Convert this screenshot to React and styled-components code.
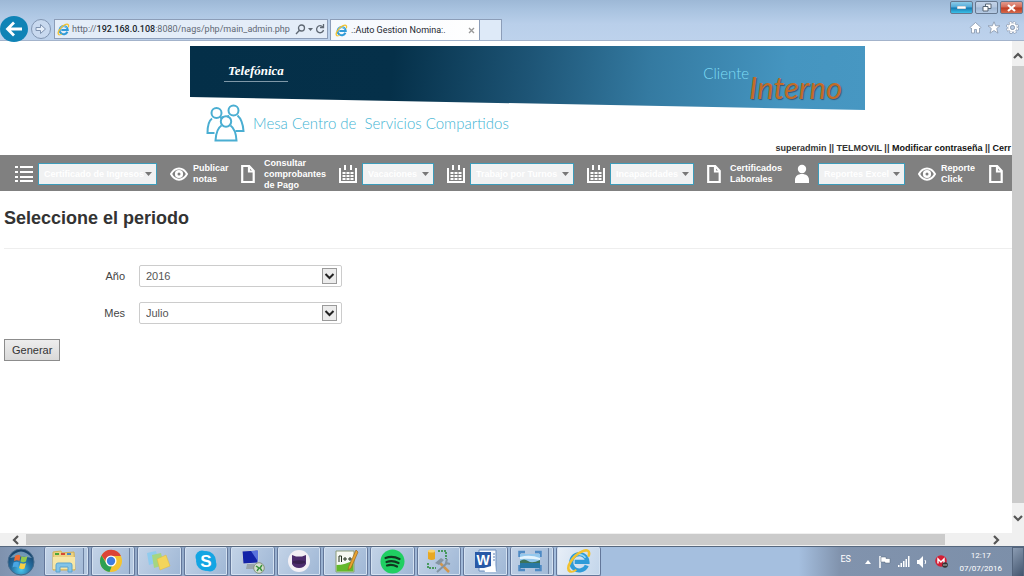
import React from "react";
import styled, { createGlobalStyle } from "styled-components";

const Global = createGlobalStyle`
  * { box-sizing: border-box; }
  body { margin: 0; background: #fff; font-family: "Liberation Sans", Arial, sans-serif; }
  button, select, input { font-family: inherit; margin: 0; }
  svg { display: block; flex: none; }
`;

const ui = `Roboto, "Noto Sans", sans-serif`;

const Screen = styled.div`
  display: flex;
  flex-direction: column;
  height: 100vh;
  overflow: hidden;
`;

/* ---------- browser frame ---------- */
const Frame = styled.header`
  flex: none;
  background: linear-gradient(#9db8d6 0, #a9c3e0 10px, #b9cfea 24px, #bdd2ec 100%);
  border-bottom: 1px solid #a3b3cb;
  font-family: ${ui};
`;
const TitleRow = styled.div`
  display: flex;
  justify-content: flex-end;
  gap: 2px;
  height: 18px;
  padding: 1px 1px 4px 0;
`;
const winTones = {
  min: "linear-gradient(#8ccbe8, #4fa9d8 48%, #1576ae 52%, #3ac0e8)",
  max: "linear-gradient(#c3d3e8, #b3c6df 48%, #9db5d3 52%, #b6cbe4)",
  close: "linear-gradient(#e39a8c, #d26a56 48%, #bd3a20 52%, #d5694c)",
};
const WinButton = styled.button`
  display: flex;
  align-items: center;
  justify-content: center;
  width: 23px;
  padding: 0;
  border: 1px solid #66788f;
  border-radius: 2px;
  background: ${(p) => winTones[p.$tone]};
`;
const BarRow = styled.div`
  display: flex;
  align-items: flex-end;
  height: 22px;
`;
const NavCircles = styled.div`
  display: flex;
  align-items: center;
  align-self: flex-start;
  width: 54px;
  height: 22px;
  gap: 3px;
`;
const BackButton = styled.button`
  display: flex;
  align-items: center;
  justify-content: center;
  flex: none;
  width: 28px;
  height: 26px;
  padding: 0;
  border: 0;
  border-radius: 50%;
  background: #0f83b6;
`;
const ForwardButton = styled.button`
  display: flex;
  align-items: center;
  justify-content: center;
  flex: none;
  width: 20px;
  height: 20px;
  padding: 0;
  border: 1px solid #8296b2;
  border-radius: 50%;
  background: #c8d9ef;
`;
const AddressBar = styled.div`
  display: flex;
  align-items: center;
  width: 274px;
  height: 20px;
  margin-bottom: 1px;
  padding: 0 2px;
  gap: 2px;
  border: 1px solid #8c9db8;
  background: #e4edf8;
`;
const Url = styled.span`
  flex: 1;
  color: #5f6873;
  font-size: 9px;
  line-height: 16px;
  white-space: nowrap;
  b { color: #20262d; font-weight: 500; }
`;
const BareButton = styled.button`
  display: flex;
  align-items: center;
  justify-content: center;
  padding: 0;
  border: 0;
  background: none;
`;
const Tab = styled.div`
  display: flex;
  align-items: center;
  width: 150px;
  height: 21px;
  margin-left: 2px;
  padding: 0 4px;
  gap: 3px;
  border: 1px solid #8c9db8;
  border-bottom: 0;
  background: linear-gradient(90deg, #f4f8fd, #fff);
  color: #22272e;
  font-size: 9px;
  line-height: 14px;
  span { flex: 1; white-space: nowrap; }
`;
const NewTab = styled.button`
  width: 22px;
  height: 21px;
  padding: 0;
  border: 1px solid #8c9db8;
  border-width: 1px 1px 0 0;
  background: #deeaf8;
`;
const Tools = styled.div`
  display: flex;
  gap: 5px;
  margin-left: auto;
  padding: 0 5px 6px 0;
`;

/* ---------- viewport and scroll bars ---------- */
const Viewport = styled.div`
  display: flex;
  flex: 1;
  min-height: 0;
`;
const Page = styled.main`
  flex: 1;
  min-width: 0;
  overflow: hidden;
  padding-top: 5px;
`;
const VBar = styled.div`
  display: flex;
  flex-direction: column;
  width: 12px;
  background: #f0f0f0;
  button { height: 30px; }
  i { flex: 1; margin: -5px 0 0; background: #cbcbcb; }
`;
const HBar = styled.div`
  display: flex;
  flex: none;
  height: 13px;
  padding-right: 12px;
  background: #f0f0f0;
  button { width: 32px; }
  i { flex: 1; margin: 1px 35px 1px -6px; background: #cbcbcb; }
`;

/* ---------- site header ---------- */
const Banner = styled.div`
  display: flex;
  justify-content: space-between;
  max-width: 675px;
  height: 64px;
  margin-left: 190px;
  padding: 15px 23px 0 34px;
  background: linear-gradient(95deg, #042f48 0, #053049 30%, #1d5475 50%, #347aa1 68%, #4595c0 88%, #4797c2 100%);
  clip-path: polygon(0 0, 100% 0, 100% 100%, 0 51px);
`;
const Brand = styled.div`
  align-self: flex-start;
  width: 64px;
  padding-left: 4px;
  border-bottom: 1px solid #7f98a8;
  color: #fff;
  font: italic bold 13px/20px "Liberation Serif", serif;
`;
const Slogan = styled.div`
  display: flex;
  align-items: flex-start;
  color: #7fdcf5;
  font: 300 15px/25px Lato, sans-serif;
  em {
    margin-top: 7px;
    color: #c26c27;
    font: italic 400 31px/38px Lato, sans-serif;
    text-shadow: 1px 1px 1px #35597a;
  }
`;
const Desk = styled.div`
  display: flex;
  align-items: center;
  height: 38px;
  margin: -6px 0 0 206px;
  gap: 8px;
  color: #3fb4d4;
  font: 300 15px/22px Lato, sans-serif;
  white-space: pre;
`;
const Account = styled.div`
  padding: 0 1px 1px 0;
  color: #333;
  font-size: 9px;
  font-weight: bold;
  line-height: 12px;
  text-align: right;
  white-space: nowrap;
  a { color: #111; text-decoration: none; }
`;

const Menu = styled.nav`
  display: flex;
  align-items: center;
  height: 36px;
  padding: 2px 0 0 15px;
  gap: 13px;
  background: #808080;
`;
const MenuItem = styled.div`
  display: flex;
  align-items: center;
  flex: none;
  gap: 5px;
`;
const MenuLink = styled.a`
  width: ${(p) => p.$w}px;
  color: #fff;
  font-size: 9px;
  font-weight: bold;
  line-height: 11px;
  text-decoration: none;
`;
const Pick = styled.div`
  display: grid;
  align-items: center;
  width: ${(p) => p.$w}px;
  > * { grid-area: 1 / 1; }
  > svg { justify-self: end; margin-right: 5px; pointer-events: none; }
`;
const MenuSelect = styled.select`
  width: 100%;
  height: 22px;
  padding: 0 12px 0 5px;
  appearance: none;
  border: 1px solid #3d9cba;
  border-radius: 0;
  background: #f0f1f2;
  color: #fff;
  font-size: 9px;
  font-weight: bold;
`;

/* ---------- form ---------- */
const Heading = styled.h1`
  margin: 0 0 0 4px;
  padding: 15px 0 18px;
  border-bottom: 1px solid #eee;
  color: #333;
  font-size: 18px;
  line-height: 24px;
`;
const Form = styled.form`
  display: flex;
  flex-direction: column;
  align-items: flex-start;
  gap: 15px;
  padding: 16px 4px;
  color: #444;
  font-size: 11px;
`;
const Field = styled.div`
  display: flex;
  align-items: center;
  gap: 14px;
  label { width: 121px; text-align: right; }
`;
const FormSelect = styled.select`
  width: 100%;
  height: 22px;
  padding: 0 24px 0 6px;
  appearance: none;
  border: 1px solid #ccc;
  border-radius: 2px;
  background: #fff;
  color: #555;
  font-size: 11px;
`;
const Submit = styled.button`
  height: 22px;
  padding: 0 7px;
  border: 1px solid #8c8c8c;
  border-radius: 0;
  background: linear-gradient(#ededed, #d9d9d9);
  color: #333;
  font-size: 11px;
`;

/* ---------- taskbar ---------- */
const Taskbar = styled.footer`
  display: flex;
  flex: none;
  height: 30px;
  border-top: 1px solid #56687f;
  background: linear-gradient(90deg, #7f92ae 0, #8da4c3 44px, #a5bfdf 600px, #a5bfdf 78%, #8193ad 82%, #7c8fa9 100%);
  font-family: ${ui};
`;
const Start = styled(BareButton)`
  width: 41px;
`;
const Apps = styled.div`
  display: grid;
  grid-template-columns: repeat(12, minmax(0, 1fr));
  flex: 0 1 557px;
  gap: 2px;
  margin-left: 3px;
`;
const TaskButton = styled.button`
  display: flex;
  align-items: center;
  justify-content: center;
  padding: 0 ${(p) => (p.$stack ? 4 : 0)}px 0 0;
  border: 1px solid #63779a;
  border-top: 0;
  border-radius: 2px;
  box-shadow: inset 0 0 0 1px #d3e1f1${(p) => (p.$stack ? ", inset -4px 0 0 #b4c8e0, inset -5px 0 0 #6d82a2" : "")};
  background: ${(p) => (p.$active ? "linear-gradient(110deg, #e8eff8, #c2d5ea)" : "linear-gradient(120deg, #c3d3e7, #9fb7d5)")};
`;
const Tray = styled.div`
  display: flex;
  align-items: center;
  margin-left: auto;
  gap: 7px;
  color: #fff;
  font-size: 9px;
  line-height: 13px;
`;
const Lang = styled.span`
  width: 18px;
  margin-bottom: 5px;
`;
const Clock = styled.time`
  margin: 0 3px 0 4px;
  font-size: 8px;
  text-align: center;
`;
const ShowDesktop = styled.button`
  align-self: stretch;
  width: 12px;
  padding: 0;
  border: 1px solid #53647c;
  border-bottom: 0;
  background: linear-gradient(135deg, #8b9cb3, #43556e);
`;

/* ---------- icons ---------- */
const IeIcon = ({ size }) => (
  <svg width={size} height={size} viewBox="0 0 24 24" fill="none">
    <path d="M19.2 16.2A7.5 7.5 0 1 1 19.8 12.8H8" stroke="#2f9bd8" strokeWidth="3.8" />
    <path d="M6 10A7 7 0 0 1 18 9" stroke="#8fd6f5" strokeWidth="1.4" />
    <path d="M3.5 21.5C-1 18 7 7 14 3.6c5-2.6 8.5-1.6 7 3.4" stroke="#f2c230" strokeWidth="2.4" strokeLinecap="round" />
    <path d="M3.5 21.5c1.5 1 4 0 6-1.5" stroke="#f2c230" strokeWidth="1.8" />
  </svg>
);
const Chevron = ({ d }) => (
  <svg width="12" height="12" viewBox="0 0 12 12" fill="none" stroke="#555" strokeWidth="2.2"><path d={d} /></svg>
);
const Caret = () => <svg width="7" height="4" viewBox="0 0 7 4"><path d="M0 0h7L3.5 4z" fill="#777" /></svg>;
const DropBox = () => (
  <svg width="15" height="16" viewBox="0 0 15 16">
    <rect x=".5" y=".5" width="14" height="15" fill="#ececec" stroke="#9a9a9a" />
    <path d="M3.5 6l4 4 4-4" fill="none" stroke="#222" strokeWidth="2" />
  </svg>
);
const ListIcon = () => (
  <svg width="18" height="18" viewBox="0 0 18 18" fill="#fff">
    {[1, 6, 11, 15].map((y) => <path key={y} d={`M0 ${y}h3v2H0zM5 ${y}h13v2H5z`} />)}
  </svg>
);
const EyeIcon = () => (
  <svg width="18" height="18" viewBox="0 0 18 18" fill="none" stroke="#fff">
    <path d="M1 9c4-7.5 12-7.5 16 0-4 7.5-12 7.5-16 0z" strokeWidth="2" />
    <circle cx="9" cy="9" r="2.8" strokeWidth="2.6" />
  </svg>
);
const DocIcon = () => (
  <svg width="18" height="20" viewBox="0 0 18 20" fill="none" stroke="#fff" strokeWidth="2.2">
    <path d="M1.2 2h7l4.5 5v11H1.2z" /><path d="M8 2v5.500h5" />
  </svg>
);
const CalendarIcon = () => (
  <svg width="18" height="20" viewBox="0 0 18 20" fill="#fff">
    <path d="M0 4h2v13h14V4h2v15H0zM5 1h2v5H5zM11 1h2v5h-2z" />
    {[8, 11, 14].map((y) => <path key={y} d={`M3.5 ${y}h3v2h-3zM7.5 ${y}h3v2h-3zM11.5 ${y}h3v2h-3z`} />)}
  </svg>
);
const PersonIcon = () => (
  <svg width="18" height="20" viewBox="0 0 18 20" fill="#fff">
    <circle cx="7" cy="5" r="4.2" /><path d="M0 19v-3c0-4 3-6 7-6s7 2 7 6v3z" />
  </svg>
);
const TeamIcon = () => (
  <svg width="39" height="38" viewBox="0 0 39 38" fill="none" stroke="#4aaed2" strokeWidth="2">
    <circle cx="10.5" cy="9" r="5" /><circle cx="27.5" cy="6.5" r="5" /><circle cx="20" cy="17.5" r="5.2" />
    <path d="M6 14.5C2.500 17 1.500 22 1.500 29h7M14 14l3-1M23 11.500l-2 1.500M31.500 11.500c4 3.500 5.500 8.500 6 15.500h-8" />
    <path d="M15.500 21.500C11.500 24 10 28 9.500 36.500h21C30 28 28 24 24.500 21.500" />
  </svg>
);

const appIcons = {
  Explorador: (
    <svg width="26" height="24" viewBox="0 0 26 24">
      <path d="M2 3l8-1 1 2 12-1 1 18H2z" fill="#ecd283" stroke="#d2b052" />
      <path d="M4 4h4v2H4z" fill="#4ca63c" /><path d="M10 4h4v2h-4z" fill="#d64a36" /><path d="M16 4h4v2h-4z" fill="#4789c9" />
      <path d="M2 8h22v12H2z" fill="#f7e6a6" />
      <path d="M5 23v-7q0-2 2-2h12q2 0 2 2v7h-4v-5H9v5z" fill="#83c4e8" stroke="#5aa3d0" />
    </svg>
  ),
  Chrome: (
    <svg width="24" height="24" viewBox="0 0 24 24">
      <circle cx="12" cy="12" r="11" fill="#f4c430" />
      <path d="M2.500 6.500A11 11 0 0 1 22 7H12L9 15z" fill="#dc4437" />
      <path d="M2.500 6.500L8 15.500l5 1L10.500 23A11 11 0 0 1 2.500 6.500z" fill="#2da052" />
      <circle cx="12" cy="12" r="5.5" fill="#fff" /><circle cx="12" cy="12" r="4.2" fill="#3f7de0" />
    </svg>
  ),
  Notas: (
    <svg width="26" height="22" viewBox="0 0 26 22">
      <path d="M1 3l9-2 3 11-10 3z" fill="#8fcbee" /><path d="M6 5l9-2 3 12-10 3z" fill="#a5d681" />
      <path d="M11 9l9-4 4 11-10 4z" fill="#f3d55b" stroke="#dcb93e" strokeWidth=".5" />
    </svg>
  ),
  Skype: (
    <svg width="24" height="24" viewBox="0 0 24 24">
      <circle cx="8" cy="8" r="6.5" fill="#14a5e3" /><circle cx="16" cy="16" r="6.5" fill="#14a5e3" /><circle cx="12" cy="12" r="10" fill="#14a5e3" />
      <text x="12" y="18" textAnchor="middle" fill="#fff" fontFamily="Liberation Sans" fontWeight="bold" fontSize="17">S</text>
    </svg>
  ),
  "Escritorio remoto": (
    <svg width="26" height="26" viewBox="0 0 26 26">
      <path d="M2 3l16-1v13L3 16z" fill="#1423a8" stroke="#c8d0da" /><path d="M11 3l7-.5v11z" fill="#5971dd" />
      <path d="M7 16h7l3 5H6z" fill="#9aa4ac" />
      <circle cx="19" cy="20" r="5.3" fill="#d6dfd0" stroke="#87937f" /><path d="M16 18l3 2-2 3M22 17l-2 3 2 3" stroke="#39933b" strokeWidth="1.5" fill="none" />
    </svg>
  ),
  GitHub: (
    <svg width="24" height="24" viewBox="0 0 24 24">
      <circle cx="12" cy="12" r="11" fill="#f3f0f5" />
      <path d="M5 6l4 1.500h6L19 6v9q-2 4-7 4t-7-4z" fill="#4c2c6d" /><path d="M6 12q6-1.500 12 0v2q-6 2-12 0z" fill="#38204f" />
    </svg>
  ),
  Editor: (
    <svg width="26" height="26" viewBox="0 0 26 26">
      <path d="M3 3h18v21H3z" fill="#f6f8f2" stroke="#8c9c7b" /><path d="M3.500 17q9 0 17-5v11.500h-17z" fill="#63b82a" />
      <path d="M6 14V8h2.500v6M10 11h4M12 9v4M15 11h4M17 9v4" stroke="#24321e" fill="none" />
      <path d="M23 2l2 2-7 16-3 2 1-4z" fill="#e9a331" stroke="#9a671d" strokeWidth=".7" />
    </svg>
  ),
  Spotify: (
    <svg width="25" height="25" viewBox="0 0 25 25">
      <circle cx="12.5" cy="12.5" r="12" fill="#1fcf62" />
      <path d="M5.500 9q7-2.500 14 1M6.500 13q6-2 12 1M7 16.500q5-1.500 10 1" stroke="#10361f" strokeWidth="2.2" fill="none" strokeLinecap="round" />
    </svg>
  ),
  Herramientas: (
    <svg width="26" height="26" viewBox="0 0 26 26" fill="none">
      <path d="M2 3v8q4 2 7 0V3z" fill="#e8a822" /><ellipse cx="5.5" cy="3" rx="3.5" ry="1.5" fill="#f8d36d" />
      <path d="M12 3h8v8M2 15v5h8" stroke="#268b34" strokeWidth="1.5" strokeDasharray="2 1" />
      <path d="M13 14l10 10" stroke="#d2964c" strokeWidth="2.5" /><path d="M21 15L11 24" stroke="#8495a2" strokeWidth="2" /><path d="M9 15l6-5 3 2-5 5z" fill="#8495a2" /><path d="M21 11l-1 4 4 1" stroke="#8495a2" strokeWidth="2" />
    </svg>
  ),
  Word: (
    <svg width="24" height="24" viewBox="0 0 24 24">
      <path d="M5 1h17v21H5z" fill="#f6f9fd" stroke="#6d8ebe" /><path d="M1 3h16v16H1z" fill="#2959a6" />
      <text x="9" y="16" textAnchor="middle" fill="#fff" fontFamily="Liberation Sans" fontWeight="bold" fontSize="14">W</text>
      <path d="M10 19l11-3 1 7H11z" fill="#fff" /><path d="M19 5h2M19 8h2M19 11h2" stroke="#5d7fb5" />
    </svg>
  ),
  Imagen: (
    <svg width="24" height="22" viewBox="0 0 24 22">
      <path d="M1.500 7V2H7M17 2h5.500v5M22.500 15v5H17M7 20H1.500v-5" fill="none" stroke="#4e8ac4" strokeWidth="2.5" />
      <path d="M2 4h20v14H2z" fill="#93c8ee" /><path d="M2 11q4-3 8 0t12-1v3H2z" fill="#3d7358" /><path d="M2 13h20v5H2z" fill="#2878a5" /><path d="M2 7q10-3 20 1v2Q12 8 2 9z" fill="#e3f3fd" />
    </svg>
  ),
  "Internet Explorer": <IeIcon size={26} />,
};
const stacked = ["Explorador", "Chrome", "Imagen"];

const StartOrb = () => (
  <svg width="28" height="28" viewBox="0 0 28 28">
    <defs>
      <radialGradient id="orb" cx=".5" cy=".8" r=".8"><stop offset="0" stopColor="#49c8ef" /><stop offset=".5" stopColor="#236a9c" /><stop offset="1" stopColor="#173b60" /></radialGradient>
    </defs>
    <circle cx="14" cy="14" r="13" fill="url(#orb)" stroke="#446a8b" />
    <path d="M3 10Q14-3 25 10 14 7 3 10z" fill="#a8c6dc" opacity=".6" />
    <path d="M8 8q3-2 5.500-.5L12.500 13Q10 11.500 7 13z" fill="#ec6b35" /><path d="M14.500 8q3 2 6 0L19 13.500q-3 1.500-5.500 0z" fill="#94c94b" />
    <path d="M6.500 14.500q3-1.500 5.500 0L11 20q-2.500-2-5.500-.5z" fill="#49a6e4" /><path d="M13.500 15q3 1.500 5.500 0L17.500 20.500q-3 1.500-5.500-.5z" fill="#f8cf45" />
  </svg>
);

const menu = [
  { icon: ListIcon, select: "Certificado de Ingresos", w: 119 },
  { icon: EyeIcon, link: "Publicar notas", w: 35 },
  { icon: DocIcon, link: "Consultar comprobantes de Pago", w: 62 },
  { icon: CalendarIcon, select: "Vacaciones", w: 72 },
  { icon: CalendarIcon, select: "Trabajo por Turnos", w: 104 },
  { icon: CalendarIcon, select: "Incapacidades", w: 84 },
  { icon: DocIcon, link: "Certificados Laborales", w: 52 },
  { icon: PersonIcon, select: "Reportes Excel", w: 87 },
  { icon: EyeIcon, link: "Reporte Click", w: 35 },
  { icon: DocIcon },
];

const fields = [
  { id: "anio", label: "Año", value: "2016" },
  { id: "mes", label: "Mes", value: "Julio" },
];

export default function App() {
  return (
    <Screen>
      <Global />
      <Frame>
        <TitleRow>
          <WinButton $tone="min" aria-label="Minimizar"><svg width="9" height="3"><rect width="9" height="3" fill="#fff" stroke="#5c6f80" strokeWidth=".5" /></svg></WinButton>
          <WinButton $tone="max" aria-label="Restaurar">
            <svg width="10" height="9" viewBox="0 0 10 9"><path d="M3.500 1h5.500v4.500H3.500z" fill="#fff" stroke="#566474" /><path d="M1 3.500h5v4.500H1z" fill="#fff" stroke="#566474" /></svg>
          </WinButton>
          <WinButton $tone="close" aria-label="Cerrar"><svg width="9" height="8" viewBox="0 0 9 8"><path d="M1 1l7 6M8 1L1 7" stroke="#fff" strokeWidth="2.2" /></svg></WinButton>
        </TitleRow>
        <BarRow>
          <NavCircles>
            <BackButton aria-label="Atrás"><svg width="18" height="16" viewBox="0 0 18 16" fill="none" stroke="#fff" strokeWidth="2.8"><path d="M9 1.500L2.500 8 9 14.500M2.500 8H17" /></svg></BackButton>
            <ForwardButton aria-label="Adelante"><svg width="12" height="12" viewBox="0 0 12 12" fill="#e6effa" stroke="#7f93b0"><path d="M1 4.500h4.500v-3L10.500 6l-5 4.500v-3H1z" /></svg></ForwardButton>
          </NavCircles>
          <AddressBar>
            <IeIcon size={13} />
            <Url>http://<b>192.168.0.108</b>:8080/nags/php/main_admin.php</Url>
            <BareButton aria-label="Buscar"><svg width="11" height="11" viewBox="0 0 11 11" fill="none" stroke="#5f6873" strokeWidth="1.3"><circle cx="6.5" cy="4" r="3" /><path d="M4.300 6.500L1 10" /></svg></BareButton>
            <svg width="5" height="3"><path d="M0 0h5L2.500 3z" fill="#5f6873" /></svg>
            <BareButton aria-label="Actualizar"><svg width="10" height="10" viewBox="0 0 10 10" fill="none" stroke="#5f6873" strokeWidth="1.3"><path d="M7.800 3A3.500 3.500 0 1 0 8.500 6" /><path d="M8.500 0v3.500H5" /></svg></BareButton>
          </AddressBar>
          <Tab>
            <IeIcon size={13} />
            <span>.:Auto Gestion Nomina:.</span>
            <BareButton aria-label="Cerrar pestaña"><svg width="7" height="7" viewBox="0 0 7 7"><path d="M1 1l5 5M6 1L1 6" stroke="#999" strokeWidth="1.4" /></svg></BareButton>
          </Tab>
          <NewTab aria-label="Nueva pestaña" />
          <Tools>
            <BareButton aria-label="Inicio"><svg width="13" height="13" viewBox="0 0 13 13"><path d="M1 6.500l5.500-5 5.500 5-1 1-.500-.500v5h-3v-3.500h-2V12h-3V7l-.500.500z" fill="#fff" stroke="#8795ab" strokeWidth=".8" /></svg></BareButton>
            <BareButton aria-label="Favoritos"><svg width="14" height="13" viewBox="0 0 14 13"><path d="M7 .8l1.700 4H13L9.700 7.500l1.300 4.700-4-2.700-4 2.700 1.300-4.700L1 4.800h4.300z" fill="#fff" stroke="#8795ab" strokeWidth=".8" /></svg></BareButton>
            <BareButton aria-label="Herramientas">
              <svg width="13" height="13" viewBox="0 0 13 13"><circle cx="6.5" cy="6.5" r="5" fill="none" stroke="#8795ab" strokeWidth="2.8" strokeDasharray="2.6 1.33" /><circle cx="6.5" cy="6.5" r="4.9" fill="#8795ab" /><circle cx="6.5" cy="6.5" r="5" fill="none" stroke="#fff" strokeWidth="1.6" strokeDasharray="2 1.93" strokeDashoffset="-.3" /><circle cx="6.5" cy="6.5" r="3.3" fill="none" stroke="#fff" strokeWidth="2" /><circle cx="6.5" cy="6.5" r="2" fill="#b9cce5" stroke="#8795ab" strokeWidth=".7" /></svg>
            </BareButton>
          </Tools>
        </BarRow>
      </Frame>

      <Viewport>
        <Page>
          <Banner>
            <Brand>Telefónica</Brand>
            <Slogan>Cliente<em>Interno</em></Slogan>
          </Banner>
          <Desk><TeamIcon />{"Mesa Centro de  Servicios Compartidos"}</Desk>
          <Account>superadmin || TELMOVIL || <a href="#clave">Modificar contraseña</a> || <a href="#salir">Cerr</a></Account>
          <Menu>
            {menu.map(({ icon: Icon, select, link, w }, i) => (
              <MenuItem key={i}>
                <Icon />
                {select && (
                  <Pick $w={w}>
                    <MenuSelect aria-label={select}><option>{select}</option></MenuSelect>
                    <Caret />
                  </Pick>
                )}
                {link && <MenuLink href="#seccion" $w={w}>{link}</MenuLink>}
              </MenuItem>
            ))}
          </Menu>
          <Heading>Seleccione el periodo</Heading>
          <Form onSubmit={(e) => e.preventDefault()}>
            {fields.map((f) => (
              <Field key={f.id}>
                <label htmlFor={f.id}>{f.label}</label>
                <Pick $w={203}>
                  <FormSelect id={f.id}><option>{f.value}</option></FormSelect>
                  <DropBox />
                </Pick>
              </Field>
            ))}
            <Submit type="submit">Generar</Submit>
          </Form>
        </Page>
        <VBar>
          <BareButton aria-label="Subir"><Chevron d="M2 8l4-4 4 4" /></BareButton>
          <i />
          <BareButton aria-label="Bajar"><Chevron d="M2 4l4 4 4-4" /></BareButton>
        </VBar>
      </Viewport>
      <HBar>
        <BareButton aria-label="Izquierda"><Chevron d="M8 2L4 6l4 4" /></BareButton>
        <i />
        <BareButton aria-label="Derecha"><Chevron d="M4 2l4 4-4 4" /></BareButton>
      </HBar>

      <Taskbar>
        <Start aria-label="Inicio"><StartOrb /></Start>
        <Apps>
          {Object.entries(appIcons).map(([name, icon]) => (
            <TaskButton key={name} aria-label={name} $stack={stacked.includes(name)} $active={name === "Internet Explorer"}>{icon}</TaskButton>
          ))}
        </Apps>
        <Tray>
          <Lang>ES</Lang>
          <svg width="6" height="4"><path d="M0 4h6L3 0z" fill="#fff" /></svg>
          <svg width="13" height="13" viewBox="0 0 13 13"><path d="M2 1v12" stroke="#fff" strokeWidth="1.5" /><path d="M3 2h5v1.500h4V8H7V7H3z" fill="#fff" stroke="#55657a" strokeWidth=".5" /></svg>
          <svg width="12" height="11" viewBox="0 0 12 11" fill="#fff"><path d="M0 9h1.500v2H0zM2.500 7H4v4H2.500zM5 5h1.500v6H5zM7.500 3H9v8H7.500zM10 0h1.500v11H10z" /></svg>
          <svg width="11" height="12" viewBox="0 0 11 12"><path d="M0 4h2l4-4v12L2 8H0z" fill="#fff" /><path d="M8 4q1.500 2 0 4" fill="none" stroke="#fff" /></svg>
          <svg width="13" height="13" viewBox="0 0 13 13"><circle cx="6" cy="6" r="5.8" fill="#d41f35" /><path d="M3 8.500V4l3 3 3-3v4.500" fill="none" stroke="#fff" strokeWidth="1.4" /><circle cx="10" cy="10" r="2.8" fill="#333" /><path d="M9 9v2M11 9v2" stroke="#ddd" strokeWidth=".8" /></svg>
          <Clock><div>12:17</div><div>07/07/2016</div></Clock>
          <ShowDesktop aria-label="Mostrar escritorio" />
        </Tray>
      </Taskbar>
    </Screen>
  );
}
